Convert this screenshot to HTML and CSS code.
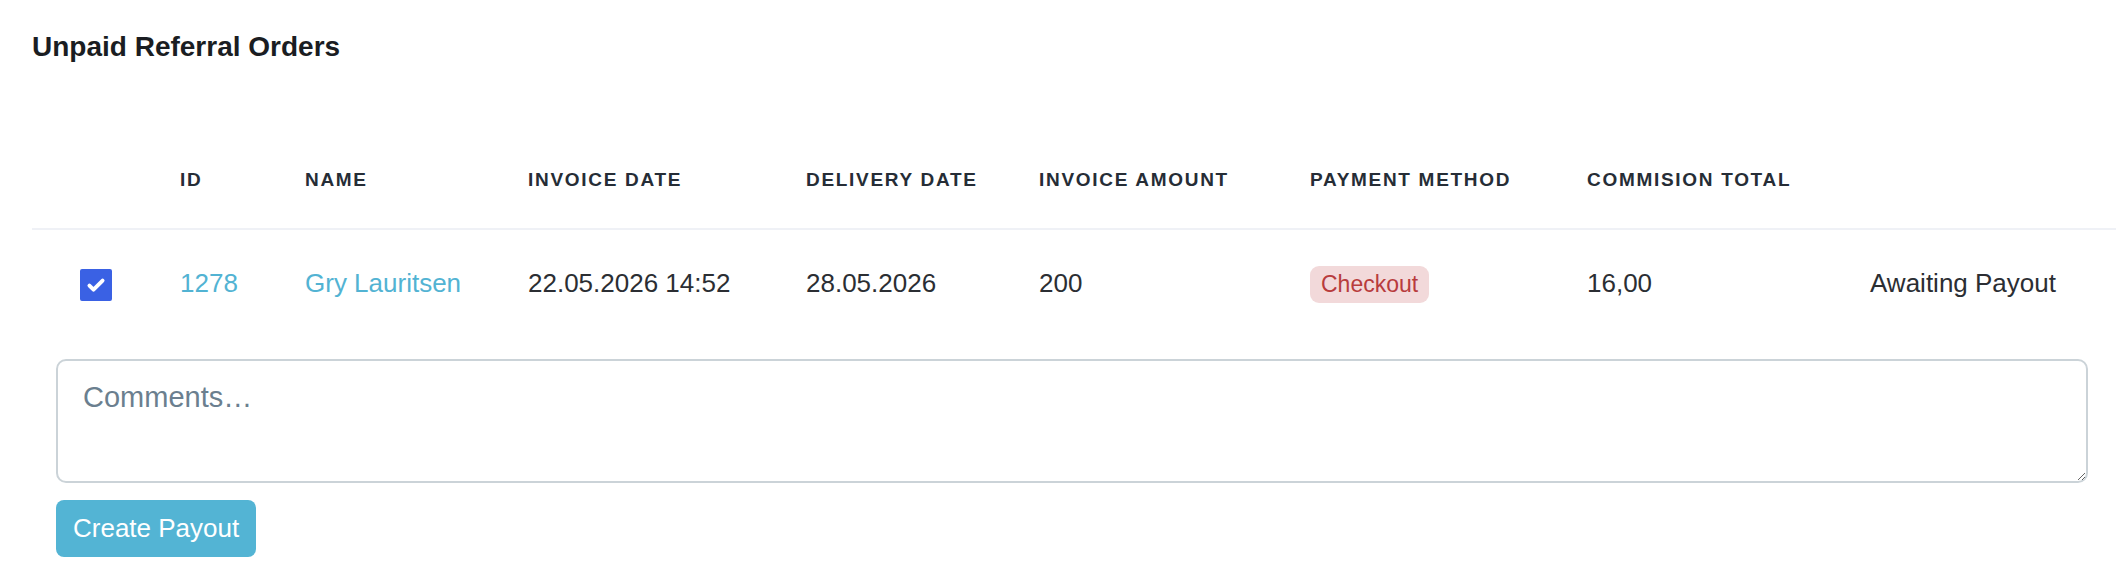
FILE: index.html
```html
<!DOCTYPE html>
<html lang="en">
<head>
  <meta charset="UTF-8">
  <title>Unpaid Referral Orders</title>
  <link rel="stylesheet" href="styles.css">
</head>
<body>
  <div class="panel">
    <h1 class="panel-title">Unpaid Referral Orders</h1>

    <table class="orders">
      <colgroup>
        <col class="col-check">
        <col class="col-id">
        <col class="col-name">
        <col class="col-invoice">
        <col class="col-delivery">
        <col class="col-amount">
        <col class="col-method">
        <col class="col-commission">
        <col class="col-status">
      </colgroup>
      <thead>
        <tr>
          <th></th>
          <th>ID</th>
          <th>Name</th>
          <th>Invoice Date</th>
          <th>Delivery Date</th>
          <th>Invoice Amount</th>
          <th>Payment Method</th>
          <th>Commision Total</th>
          <th></th>
        </tr>
      </thead>
      <tbody>
        <tr>
          <td class="cell-check">
            <span class="checkbox checked">
              <svg viewBox="0 0 16 16" width="22" height="22"><path d="M3.2 8.4l3 3L12.8 4.8" fill="none" stroke="#fff" stroke-width="2.8" stroke-linecap="round" stroke-linejoin="round"/></svg>
            </span>
          </td>
          <td><a href="#" class="link">1278</a></td>
          <td><a href="#" class="link">Gry Lauritsen</a></td>
          <td>22.05.2026 14:52</td>
          <td>28.05.2026</td>
          <td>200</td>
          <td><span class="badge badge-red">Checkout</span></td>
          <td>16,00</td>
          <td>Awaiting Payout</td>
        </tr>
      </tbody>
    </table>

    <div class="payout-form">
      <textarea class="comments" placeholder="Comments…"></textarea>
      <button class="btn-payout">Create Payout</button>
    </div>
  </div>
</body>
</html>
```

FILE: styles.css
```css
body {
  margin: 0;
  background: #fff;
  font-family: "Liberation Sans", Arial, sans-serif;
  color: #2b2e33;
}

.panel {
  padding: 30px 0 40px 32px;
}

.panel-title {
  margin: 0;
  font-size: 28px;
  line-height: 34px;
  font-weight: bold;
  color: #1a1d22;
}

.orders {
  margin-top: 68px;
  width: 2084px;
  table-layout: fixed;
  border-collapse: collapse;
}

.col-check { width: 124px; }
.col-id { width: 125px; }
.col-name { width: 223px; }
.col-invoice { width: 278px; }
.col-delivery { width: 233px; }
.col-amount { width: 271px; }
.col-method { width: 277px; }
.col-commission { width: 283px; }
.col-status { width: 270px; }

.orders th {
  padding: 36px 24px;
  font-size: 19px;
  line-height: 24px;
  font-weight: bold;
  letter-spacing: 1.7px;
  text-transform: uppercase;
  text-align: left;
  color: #262d36;
  border-bottom: 2px solid #eff1f6;
  white-space: nowrap;
}

.orders td {
  height: 106px;
  padding: 0 24px;
  font-size: 26px;
  vertical-align: middle;
  white-space: nowrap;
}

.orders td.cell-check {
  padding: 0;
  text-align: center;
}

.checkbox {
  display: inline-flex;
  align-items: center;
  justify-content: center;
  width: 32px;
  height: 32px;
  margin-left: 3px;
  margin-top: 4px;
  border-radius: 2px;
  vertical-align: middle;
  border: 2px solid #c4cdd3;
  box-sizing: border-box;
}

.checkbox.checked {
  background: #3a61e4;
  border-color: #3a61e4;
}

.link {
  color: #52b3d3;
  text-decoration: none;
}

.badge {
  display: inline-block;
  padding: 5px 11px;
  font-size: 23px;
  line-height: 27px;
  border-radius: 9px;
  margin-top: 3px;
}

.badge-red {
  background: #f2d9da;
  color: #b83c3d;
}

.payout-form {
  margin-top: 23px;
  padding: 0 28px 0 24px;
}

.comments {
  display: block;
  width: 100%;
  height: 124px;
  box-sizing: border-box;
  padding: 15px 25px;
  border: 2px solid #cbd3d8;
  border-radius: 10px;
  font-family: "Liberation Sans", Arial, sans-serif;
  font-size: 29px;
  line-height: 1.5;
  color: #2b2e33;
  outline: none;
}

.comments::placeholder {
  color: #6b7f8f;
}

.btn-payout {
  margin-top: 17px;
  padding: 9px 17px;
  font-family: "Liberation Sans", Arial, sans-serif;
  font-size: 26px;
  line-height: 39px;
  color: #fff;
  background: #53b4d4;
  border: none;
  border-radius: 8px;
  cursor: pointer;
}
```
